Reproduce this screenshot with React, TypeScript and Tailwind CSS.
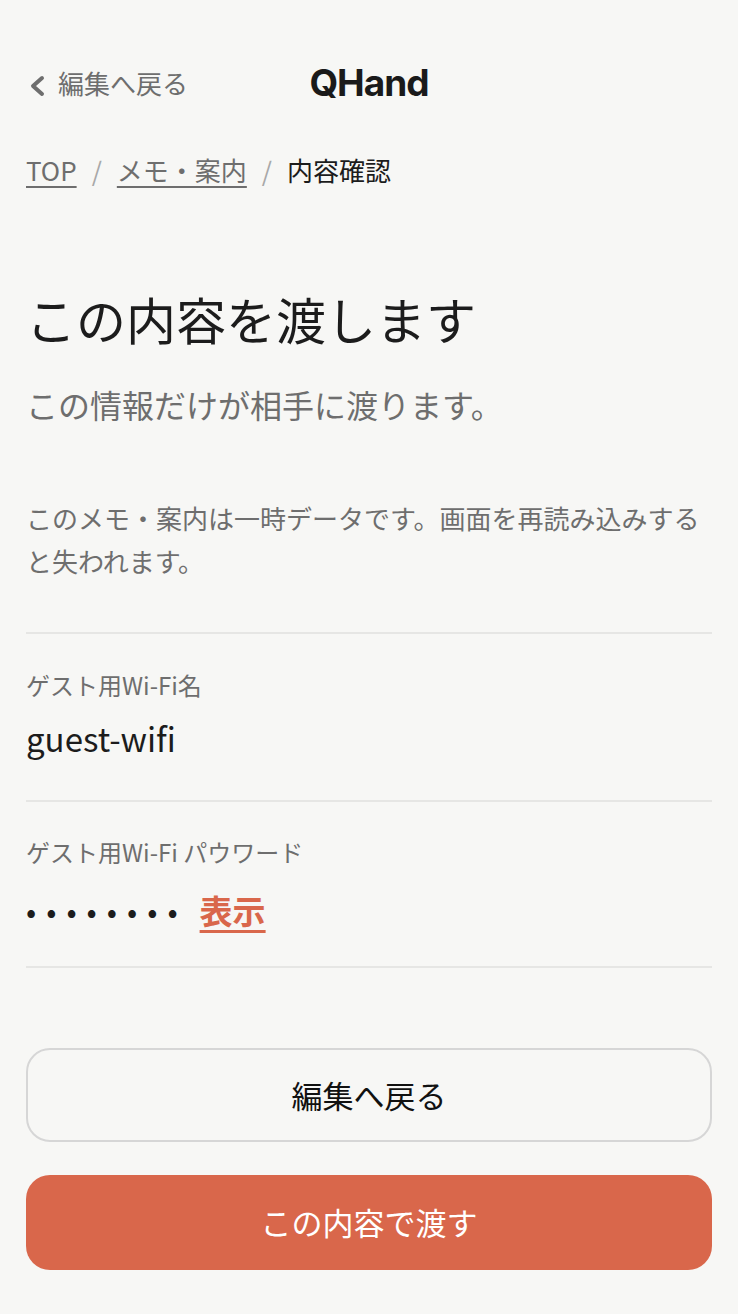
const App = () => {
  const jp = { fontFamily: '"Noto Sans CJK JP", "Noto Sans", sans-serif' }

  return (
    <div
      className="min-h-[1314px] w-full bg-[#f7f7f5] px-[26px] text-[#1c1c1c]"
      style={jp}
    >
      {/* header */}
      <div className="grid grid-cols-3 items-center pt-[52px] h-[114px]">
        <div className="flex items-center gap-[12px] text-[26px] text-[#6e6e6e] leading-[62px]">
          <svg width="18" height="22" viewBox="0 0 18 22" className="ml-[2px] mt-[6px]">
            <polyline
              points="14,3 5,11 14,19"
              fill="none"
              stroke="#6e6e6e"
              strokeWidth="4"
              strokeLinecap="round"
              strokeLinejoin="round"
            />
          </svg>
          <span className="whitespace-nowrap">編集へ戻る</span>
        </div>
        <div
          className="text-center text-[37px] font-bold tracking-[-1px] text-[#1a1a1a]"
          style={{ fontFamily: 'Inter, "Noto Sans", sans-serif' }}
        >
          QHand
        </div>
        <div />
      </div>

      {/* breadcrumb */}
      <nav className="mt-[38px] flex items-center text-[26px] leading-[36px]">
        <span className="underline underline-offset-[5px] decoration-[2px] text-[#6e6e6e]">TOP</span>
        <span className="mx-[15px] text-[#a8a8a8]">/</span>
        <span className="underline underline-offset-[5px] decoration-[2px] text-[#6e6e6e]">メモ・案内</span>
        <span className="mx-[15px] text-[#a8a8a8]">/</span>
        <span className="text-[#1c1c1c]">内容確認</span>
      </nav>

      <h1 className="mt-[98px] text-[50px] leading-[64px] font-normal">この内容を渡します</h1>
      <p className="mt-[32px] text-[32px] leading-[44px] text-[#6e6e6e]">
        この情報だけが相手に渡ります。
      </p>

      <p className="mt-[70px] text-[26px] leading-[43px] text-[#6e6e6e]">
        このメモ・案内は一時データです。画面を再読み込みすると失われます。
      </p>

      <div className="mt-[50px] border-t-2 border-[#e6e6e4]">
        <div className="pt-[33px] pb-[42px] border-b-2 border-[#e6e6e4]">
          <div className="text-[24px] leading-[36px] text-[#6e6e6e]">ゲスト用Wi-Fi名</div>
          <div className="mt-[15px] text-[33px] leading-[40px]">guest-wifi</div>
        </div>
        <div className="pt-[32px] pb-[36px] border-b-2 border-[#e6e6e4]">
          <div className="text-[24px] leading-[36px] text-[#6e6e6e]">ゲスト用Wi-Fi パウワード</div>
          <div className="mt-[20px] flex items-center h-[40px]">
            <span className="text-[30px] tracking-[10px] text-[#1c1c1c]">••••••••</span>
            <button className="ml-[12px] text-[33px] font-bold text-[#d9674b] underline underline-offset-[6px] decoration-[3px] leading-[40px]">
              表示
            </button>
          </div>
        </div>
      </div>

      <div className="mt-[80px] flex flex-col gap-[33px] pb-[40px]">
        <button className="h-[94px] w-full rounded-[24px] border-2 border-[#d6d6d6] bg-transparent text-[31px] text-[#111]">
          編集へ戻る
        </button>
        <button className="h-[95px] w-full rounded-[24px] bg-[#d9674b] text-[31px] text-white">
          この内容で渡す
        </button>
      </div>
    </div>
  )
}

export default App
